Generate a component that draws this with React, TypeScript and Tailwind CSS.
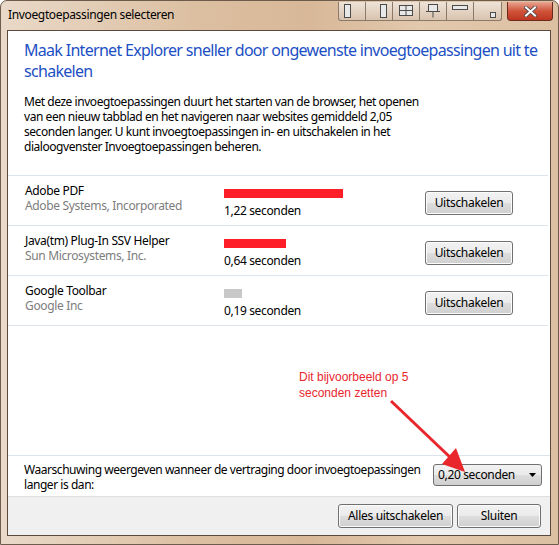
import React from "react";

const font = { fontFamily: '"Noto Sans", "Open Sans", sans-serif' };

const Win7Button = ({ label, className = "" }: { label: string; className?: string }) => (
  <button
    className={`h-[24px] rounded-[3px] border border-[#707070] bg-[linear-gradient(to_bottom,#f2f2f2,#ebebeb_48%,#dddddd_52%,#cfcfcf)] text-[12px] tracking-[-0.3px] text-black shadow-[inset_0_0_0_1px_#fcfcfc] ${className}`}
  >
    {label}
  </button>
);

const SnapIcon = ({ children }: { children: React.ReactNode }) => (
  <div className="flex h-full w-[27px] items-center justify-center border-r border-[#8a7a6a] last:border-r-0">
    <svg width="18" height="14" viewBox="0 0 18 14" fill="none" stroke="#4b4b4b" strokeWidth="1">
      {children}
    </svg>
  </div>
);

const addons = [
  { name: "Adobe PDF", vendor: "Adobe Systems, Incorporated", time: "1,22 seconden", bar: "w-[119px] bg-[#fe1e27]" },
  { name: "Java(tm) Plug-In SSV Helper", vendor: "Sun Microsystems, Inc.", time: "0,64 seconden", bar: "w-[62px] bg-[#fe1e27]" },
  { name: "Google Toolbar", vendor: "Google Inc", time: "0,19 seconden", bar: "w-[18px] bg-[#c8c8c8]" },
];

export default function App() {
  return (
    <div
      style={font}
      className="relative flex h-[545px] w-[559px] flex-col overflow-hidden rounded-t-[7px] border border-[#6d5c4c] bg-[linear-gradient(to_right,#e9d9c8,#dcbfa1_35%,#d8b898_55%,#e2c8ad_75%,#dcc0a2)]"
    >
      {/* title bar */}
      <div className="flex h-[29px] items-start justify-between pl-[7px] pr-[5px]">
        <span className="mt-[5px] text-[12px] tracking-[-0.35px] text-black">Invoegtoepassingen selecteren</span>
        <div className="mt-[1px] flex items-start gap-[5px]">
          <div className="flex h-[19px] rounded-b-[3px] border border-t-0 border-[#8a7a6a] bg-[linear-gradient(to_bottom,#eee3d8,#d9c3ae)]">
            <SnapIcon>
              <rect x="1.5" y="0.5" width="6" height="13" fill="#e8e8e8" />
            </SnapIcon>
            <SnapIcon>
              <rect x="10.5" y="0.5" width="6" height="13" fill="#e8e8e8" />
            </SnapIcon>
            <SnapIcon>
              <rect x="2.5" y="1.5" width="13" height="10" fill="#e8e8e8" />
              <path d="M9 1.5v10M2.5 6.5h13" />
            </SnapIcon>
            <SnapIcon>
              <rect x="4.5" y="0.5" width="9" height="7" fill="#e8e8e8" />
              <path d="M9 7.5v6M2 7.5h14" />
            </SnapIcon>
            <SnapIcon>
              <rect x="1.5" y="1.5" width="15" height="4" fill="#e8e8e8" />
            </SnapIcon>
            <SnapIcon>
              <rect x="11.5" y="8.5" width="5" height="5" fill="#e8e8e8" />
            </SnapIcon>
          </div>
          <div className="flex h-[19px] w-[46px] items-center justify-center rounded-b-[4px] border border-t-0 border-[#6b2a1f] bg-[linear-gradient(to_bottom,#e8a592,#d0533a_50%,#bd3620)]">
            <svg width="13" height="11" viewBox="0 0 13 11">
              <path d="M2 1.5l9 8M11 1.5l-9 8" stroke="#4a4a4a" strokeWidth="3.6" strokeLinecap="square" />
              <path d="M2 1.5l9 8M11 1.5l-9 8" stroke="#ffffff" strokeWidth="2" strokeLinecap="square" />
            </svg>
          </div>
        </div>
      </div>

      {/* client area */}
      <div className="ml-[6px] mr-[7px] mb-[8px] flex flex-1 flex-col border border-[#5a4a3e] bg-white">
        <div className="flex flex-1 flex-col">
          <h1 className="whitespace-nowrap pl-[16px] pt-[9px] text-[16px] leading-[21px] tracking-[-0.7px] text-[#1c4fc4]">
            Maak Internet Explorer sneller door ongewenste invoegtoepassingen uit te
            <br />
            schakelen
          </h1>
          <p className="mt-[12px] whitespace-nowrap pl-[16px] text-[12px] leading-[15px] tracking-[-0.45px] text-black">
            Met deze invoegtoepassingen duurt het starten van de browser, het openen
            <br />
            van een nieuw tabblad en het navigeren naar websites gemiddeld 2,05
            <br />
            seconden langer. U kunt invoegtoepassingen in- en uitschakelen in het
            <br />
            dialoogvenster Invoegtoepassingen beheren.
          </p>

          <div className="mr-[2px] mt-[21px] border-t border-[#dde3ea]">
            {addons.map((a) => (
              <div key={a.name} className="flex h-[50px] items-start border-b border-[#dde3ea] pl-[17px]">
                <div className="mt-[7px] w-[199px] text-[12px] leading-[15px] tracking-[-0.35px]">
                  <div className="text-black">{a.name}</div>
                  <div className="text-[#7d7d7d]">{a.vendor}</div>
                </div>
                <div className="mt-[13px] w-[201px]">
                  <div className={`h-[9px] ${a.bar}`} />
                  <div className="mt-[5px] text-[12px] leading-[15px] tracking-[-0.35px] text-black">{a.time}</div>
                </div>
                <Win7Button label="Uitschakelen" className="mt-[15px] w-[88px]" />
              </div>
            ))}
          </div>

          <div className="flex-1" />

          <div className="flex items-start justify-between border-t border-[#dde3ea] pb-[4px] pl-[16px] pr-[8px] pt-[6px]">
            <p className="whitespace-nowrap text-[12px] leading-[15px] tracking-[-0.45px] text-black">
              Waarschuwing weergeven wanneer de vertraging door invoegtoepassingen
              <br />
              langer is dan:
            </p>
            <div className="mt-[2px] flex h-[22px] w-[109px] items-center justify-between rounded-[3px] border border-[#707070] bg-[linear-gradient(to_bottom,#f2f2f2,#ebebeb_48%,#dddddd_52%,#cfcfcf)] pl-[4px] pr-[5px] text-[12px] tracking-[-0.35px] text-black">
              <span>0,20 seconden</span>
              <svg width="7" height="4" viewBox="0 0 7 4">
                <path d="M0 0h7L3.5 4z" fill="#000" />
              </svg>
            </div>
          </div>
        </div>

        <div className="flex h-[39px] items-center justify-end gap-[4px] border-t border-[#dfdfdf] bg-[#f0f0f0] pr-[9px]">
          <Win7Button label="Alles uitschakelen" className="w-[115px]" />
          <Win7Button label="Sluiten" className="w-[84px]" />
        </div>
      </div>

      {/* annotation overlay */}
      <div className="absolute left-[298px] top-[368px] text-[12px] leading-[16px] text-[#e8262c]" style={{ fontFamily: '"Liberation Sans", Arial, sans-serif' }}>
        Dit bijvoorbeeld op 5
        <br />
        seconden zetten
      </div>
      <svg className="pointer-events-none absolute left-0 top-0" width="559" height="545">
        <line x1="390" y1="400" x2="452" y2="459" stroke="#e8262c" strokeWidth="3" />
        <polygon points="464,471 441,463 455,447" fill="#e8262c" />
      </svg>
    </div>
  );
}
